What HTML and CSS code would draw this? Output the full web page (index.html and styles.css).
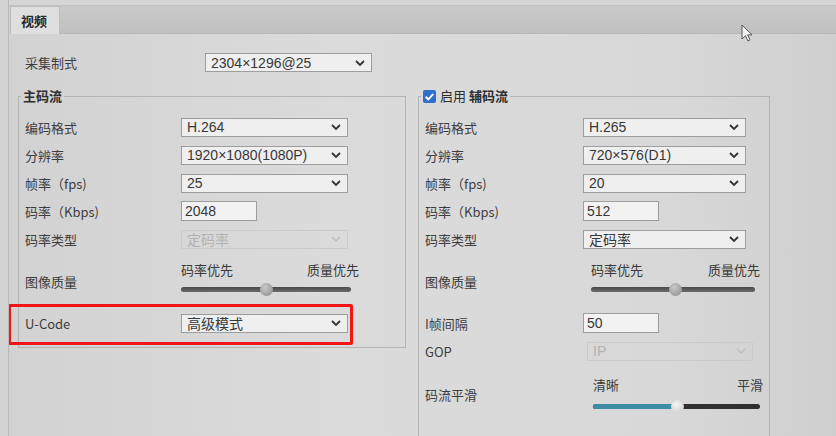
FILE: index.html
```html
<!DOCTYPE html>
<html lang="zh-CN">
<head>
    <meta charset="UTF-8">
    <title>视频</title>
    <link rel="stylesheet" href="styles.css">
</head>
<body>
    <div class="frame">
        <div class="topline"></div>
        <div class="tabs">
            <div class="tab active">视频</div>
            <div class="tab-rest"></div>
        </div>
        <div class="panel">
            <div class="capture">
                <span class="label">采集制式</span>
                <div class="select capture-select"><span>2304×1296@25</span><svg class="chev" viewBox="0 0 10 6"><path d="M1 1l4 4 4-4"/></svg></div>
            </div>

            <div class="streams">
                <fieldset class="stream main">
                    <legend>主码流</legend>
                    <div class="row"><span class="label">编码格式</span><div class="select"><span>H.264</span><svg class="chev" viewBox="0 0 10 6"><path d="M1 1l4 4 4-4"/></svg></div></div>
                    <div class="row"><span class="label">分辨率</span><div class="select"><span>1920×1080(1080P)</span><svg class="chev" viewBox="0 0 10 6"><path d="M1 1l4 4 4-4"/></svg></div></div>
                    <div class="row"><span class="label">帧率（fps)</span><div class="select"><span>25</span><svg class="chev" viewBox="0 0 10 6"><path d="M1 1l4 4 4-4"/></svg></div></div>
                    <div class="row"><span class="label">码率（Kbps)</span><div class="input">2048</div></div>
                    <div class="row"><span class="label">码率类型</span><div class="select disabled"><span>定码率</span><svg class="chev" viewBox="0 0 10 6"><path d="M1 1l4 4 4-4"/></svg></div></div>
                    <div class="row quality"><span class="label">图像质量</span>
                        <div class="slider-box">
                            <div class="slider-labels"><span>码率优先</span><span>质量优先</span></div>
                            <div class="track"><span class="thumb" style="left: 50%"></span></div>
                        </div>
                    </div>
                    <div class="row ucode"><span class="label">U-Code</span><div class="select"><span class="cn">高级模式</span><svg class="chev" viewBox="0 0 10 6"><path d="M1 1l4 4 4-4"/></svg></div></div>
                    <div class="highlight"></div>
                </fieldset>

                <fieldset class="stream sub">
                    <legend><span class="check"><svg viewBox="0 0 12 12"><path d="M2.5 6.2l2.4 2.4 4.6-5"/></svg></span><span class="enable">启用</span> 辅码流</legend>
                    <div class="row"><span class="label">编码格式</span><div class="select"><span>H.265</span><svg class="chev" viewBox="0 0 10 6"><path d="M1 1l4 4 4-4"/></svg></div></div>
                    <div class="row"><span class="label">分辨率</span><div class="select"><span>720×576(D1)</span><svg class="chev" viewBox="0 0 10 6"><path d="M1 1l4 4 4-4"/></svg></div></div>
                    <div class="row"><span class="label">帧率（fps)</span><div class="select"><span>20</span><svg class="chev" viewBox="0 0 10 6"><path d="M1 1l4 4 4-4"/></svg></div></div>
                    <div class="row"><span class="label">码率（Kbps)</span><div class="input">512</div></div>
                    <div class="row"><span class="label">码率类型</span><div class="select"><span class="cn">定码率</span><svg class="chev" viewBox="0 0 10 6"><path d="M1 1l4 4 4-4"/></svg></div></div>
                    <div class="row quality"><span class="label">图像质量</span>
                        <div class="slider-box">
                            <div class="slider-labels"><span>码率优先</span><span>质量优先</span></div>
                            <div class="track"><span class="thumb" style="left: 51%"></span></div>
                        </div>
                    </div>
                    <div class="row"><span class="label">I帧间隔</span><div class="input">50</div></div>
                    <div class="row"><span class="label">GOP</span><div class="select disabled"><span>IP</span><svg class="chev" viewBox="0 0 10 6"><path d="M1 1l4 4 4-4"/></svg></div></div>
                    <div class="row smooth"><span class="label">码流平滑</span>
                        <div class="slider-box">
                            <div class="slider-labels"><span>清晰</span><span>平滑</span></div>
                            <div class="track"><span class="fill" style="width: 50%"></span><span class="thumb" style="left: 50%"></span></div>
                        </div>
                    </div>
                </fieldset>
            </div>
        </div>

        <svg class="cursor" viewBox="0 0 12 18"><path d="M1 1v14l3.5-3.3 2.3 5.2 2.2-1-2.3-5H11z"/></svg>
    </div>
</body>
</html>
```

FILE: styles.css
```css
* { box-sizing: border-box; }
body {
    margin: 0;
    width: 836px;
    height: 436px;
    overflow: hidden;
    background: linear-gradient(90deg, #d3d2d2, #dcdbdb 40%, #d9d8d8 80%, #cfcfcf);
    font-family: "Noto Sans CJK SC", "Liberation Sans", sans-serif;
    font-size: 13px;
    color: #3d3d3d;
}
.frame {
    position: relative;
    height: 436px;
    overflow: hidden;
    margin-left: 8px;
    border-left: 1px solid #b9b9b9;
}
.topline {
    height: 6px;
    border-bottom: 1px solid #c2c2c2;
    background: #d6d6d6;
}
.tabs {
    display: flex;
    height: 28px;
}
.tab {
    width: 50px;
    margin-left: 1px;
    padding-left: 10px;
    line-height: 28px;
    font-weight: bold;
    color: #2a2a2a;
    background: #e0dfdf;
    border: 1px solid #bdbdbd;
    border-bottom: none;
}
.tab-rest {
    flex: 1;
    background: linear-gradient(#cbcaca, #c1c0c0);
    border-bottom: 1px solid #b8b8b8;
}

.panel { padding-left: 9px; }
.capture {
    display: flex;
    align-items: center;
    height: 19px;
    margin-top: 19px;
    padding-left: 7px;
}
.capture .label { width: 180px; }
.capture-select { width: 164px; }

.streams {
    display: flex;
    align-items: flex-start;
    gap: 12px;
    margin-top: 15px;
}
.stream {
    margin: 0;
    padding: 8px 6px 10px 6px;
    border: 1px solid #b4b4b4;
    position: relative;
}
.stream legend {
    margin-left: -4px;
    padding: 0 2px;
    line-height: 18px;
    font-weight: bold;
    color: #2e2e2e;
}
.main { width: 388px; }
.sub { width: 348px; padding-bottom: 24px; }

.row {
    display: grid;
    grid-template-columns: 156px 1fr;
    align-items: center;
    height: 28px;
}
.sub .row { grid-template-columns: 158px 1fr; }
.row.quality { height: 56px; }
.row.smooth { height: 58px; }

.select {
    width: 167px;
    height: 19px;
    display: flex;
    align-items: center;
    justify-content: space-between;
    padding: 0 6px 0 5px;
    border: 1px solid #9d9d9d;
    background: #efefef;
    font-family: "Liberation Sans", "Noto Sans CJK SC", sans-serif;
    font-size: 14px;
    color: #383838;
}
.sub .select { width: 163px; }
.select .cn { font-family: "Noto Sans CJK SC", sans-serif; font-size: 14px; }
.select.disabled {
    border-color: #cbcbcb;
    background: transparent;
    color: #b2b2b2;
}
.sub .select.disabled { width: 166px; margin-left: 4px; }
.chev {
    width: 10px;
    height: 6px;
    fill: none;
    stroke: #333;
    stroke-width: 1.8;
}
.select.disabled .chev { stroke: #bbb; stroke-width: 1.2; }

.input {
    width: 76px;
    height: 20px;
    padding-left: 3px;
    border: 1px solid #9d9d9d;
    background: #f2f2f2;
    font-family: "Liberation Sans", sans-serif;
    font-size: 14px;
    line-height: 18px;
    color: #383838;
}

.slider-box {
    display: flex;
    flex-direction: column;
    gap: 8px;
    width: 178px;
    margin-top: -10px;
}
.sub .slider-box { width: 169px; margin-left: 8px; }
.slider-labels {
    display: flex;
    justify-content: space-between;
    color: #3a3a3a;
}
.track {
    position: relative;
    width: 170px;
    height: 5px;
    border-radius: 3px;
    background: linear-gradient(#4a4a4a, #6a6a6a);
}
.sub .track { width: 164px; }
.smooth .slider-box { margin-top: -4px; gap: 10px; width: 170px; margin-left: 10px; }
.smooth .track { width: 167px; background: #2f2f2f; }
.fill {
    position: absolute;
    left: 0;
    top: 0;
    height: 5px;
    border-radius: 3px 0 0 3px;
    background: #3f8ca6;
}
.thumb {
    position: absolute;
    top: -4px;
    width: 13px;
    height: 13px;
    margin-left: -6px;
    border-radius: 50%;
    background: radial-gradient(circle at 40% 35%, #c8c8c8, #8a8a8a);
}
.smooth .thumb { background: radial-gradient(circle at 40% 35%, #f4f4f4, #c9c9c9); }

.check {
    display: inline-block;
    width: 13px;
    height: 13px;
    margin-right: 4px;
    vertical-align: -2px;
    border-radius: 2px;
    background: #2f6fd0;
}
.check svg { display: block; width: 13px; height: 13px; fill: none; stroke: #fff; stroke-width: 1.8; }
.enable { font-weight: normal; }

.highlight {
    position: absolute;
    left: -11px;
    top: 199px;
    width: 345px;
    height: 41px;
    border: 3px solid #f31515;
    border-radius: 2px;
}

.cursor {
    position: absolute;
    left: 732px;
    top: 24px;
    width: 12px;
    height: 18px;
    fill: #f4f4f4;
    stroke: #555;
    stroke-width: 1;
}
```
